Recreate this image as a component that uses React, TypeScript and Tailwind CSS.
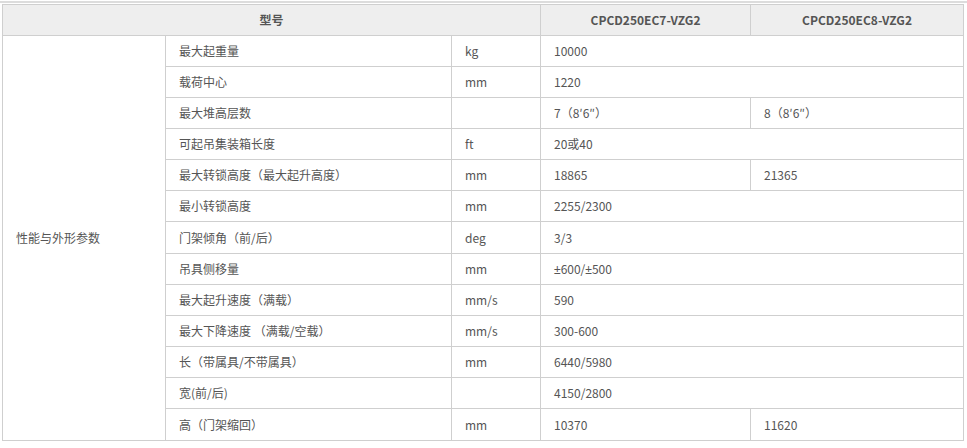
import React from 'react';

type Row = {
  name: string;
  unit: string;
  a: React.ReactNode;
  b?: string;
  h: string;
};

const pm = <span className="font-['Liberation_Sans',sans-serif]">±</span>;

const rows: Row[] = [
  { name: '最大起重量', unit: 'kg', a: '10000', h: 'h-[31px]' },
  { name: '载荷中心', unit: 'mm', a: '1220', h: 'h-[31px]' },
  { name: '最大堆高层数', unit: '', a: '7（8′6″）', b: '8（8′6″）', h: 'h-[31px]' },
  { name: '可起吊集装箱长度', unit: 'ft', a: '20或40', h: 'h-[31px]' },
  { name: '最大转锁高度（最大起升高度）', unit: 'mm', a: '18865', b: '21365', h: 'h-[31px]' },
  { name: '最小转锁高度', unit: 'mm', a: '2255/2300', h: 'h-[31px]' },
  { name: '门架倾角（前/后）', unit: 'deg', a: '3/3', h: 'h-[32px]' },
  { name: '吊具侧移量', unit: 'mm', a: <>{pm}600/{pm}500</>, h: 'h-[31px]' },
  { name: '最大起升速度（满载）', unit: 'mm/s', a: '590', h: 'h-[31px]' },
  { name: '最大下降速度 （满载/空载）', unit: 'mm/s', a: '300-600', h: 'h-[31px]' },
  { name: '长（带属具/不带属具）', unit: 'mm', a: '6440/5980', h: 'h-[31px]' },
  { name: '宽(前/后)', unit: '', a: '4150/2800', h: 'h-[31px]' },
  { name: '高（门架缩回）', unit: 'mm', a: '10370', b: '11620', h: 'h-[32px]' },
];

const cell = 'border border-[#cfcfcf] px-[13px] text-left align-middle';

export default function App() {
  return (
    <div className="w-[967px] h-[448px] bg-white text-[12px] text-[#555] font-['Noto_Sans_CJK_SC',sans-serif]">
      <div className="h-[2px] mt-px bg-[#dcdcdc]" />
      <div className="pt-px pl-[2px]">
        <table className="w-[961px] border-collapse table-fixed">
          <colgroup>
            <col className="w-[163px]" />
            <col className="w-[286px]" />
            <col className="w-[89px]" />
            <col className="w-[210px]" />
            <col className="w-[213px]" />
          </colgroup>
          <thead>
            <tr className="h-[31px] bg-[#eeeeee]">
              <th colSpan={3} className="border border-[#cfcfcf] text-center font-bold">
                型号
              </th>
              <th className="border border-[#cfcfcf] text-center font-bold">CPCD250EC7-VZG2</th>
              <th className="border border-[#cfcfcf] text-center font-bold">CPCD250EC8-VZG2</th>
            </tr>
          </thead>
          <tbody>
            {rows.map((r, i) => (
              <tr key={r.name} className={r.h}>
                {i === 0 && (
                  <td rowSpan={rows.length} className={cell}>
                    性能与外形参数
                  </td>
                )}
                <td className={cell}>{r.name}</td>
                <td className={cell}>{r.unit}</td>
                {r.b ? (
                  <>
                    <td className={cell}>{r.a}</td>
                    <td className={cell}>{r.b}</td>
                  </>
                ) : (
                  <td colSpan={2} className={cell}>
                    {r.a}
                  </td>
                )}
              </tr>
            ))}
          </tbody>
        </table>
      </div>
    </div>
  );
}
